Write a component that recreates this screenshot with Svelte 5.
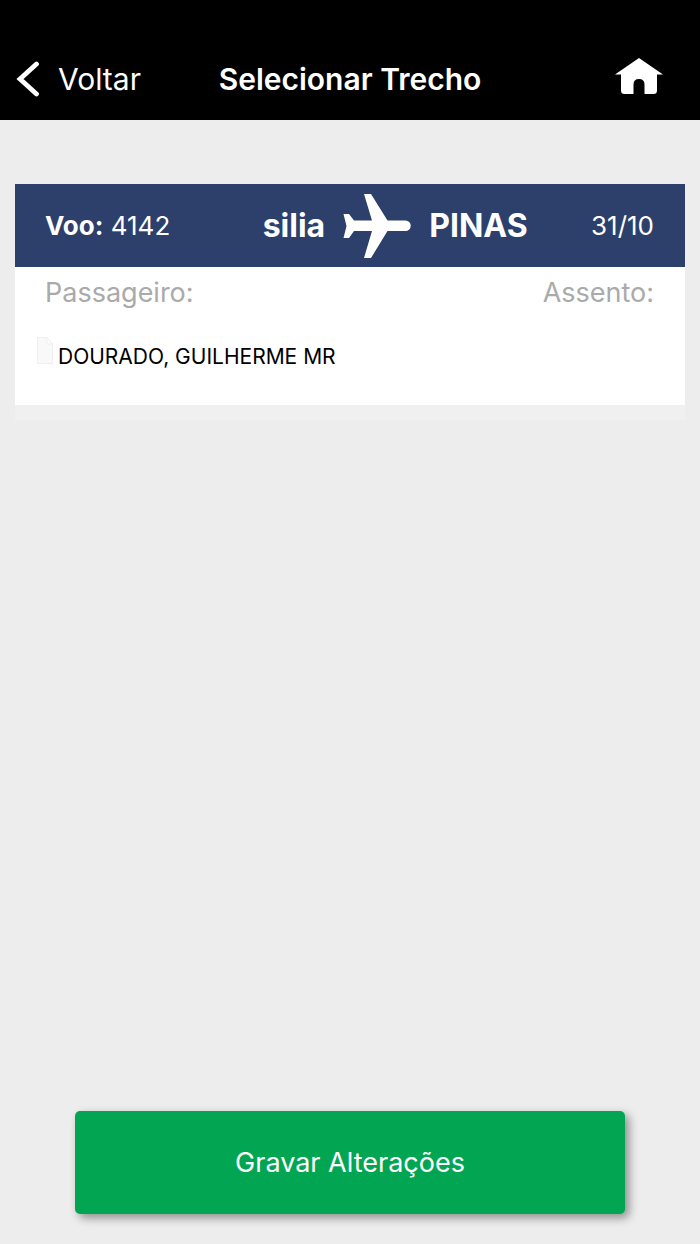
<script lang="ts">
  let { onBack = () => {}, onSave = () => {} } = $props();

  const flight = { number: '4142', from: 'silia', to: 'PINAS', date: '31/10' };

  let passengers = $state([
    { name: 'DOURADO, GUILHERME MR', seat: '' },
  ]);
</script>

<div class="page">
  <header class="navbar">
    <button class="back-btn" onclick={() => onBack()}>
      <svg width="24" height="36" viewBox="0 0 24 36" aria-hidden="true">
        <path d="M20.5 3 L4 18 L20.5 33" fill="none" stroke="#fff" stroke-width="4.8" stroke-linecap="round" />
      </svg>
      <span>Voltar</span>
    </button>
    <h1 class="title">Selecionar Trecho</h1>
    <a class="home-link" href="/" aria-label="Início">
      <svg width="48" height="37" viewBox="0 0 48 37" aria-hidden="true">
        <path
          d="M24 0 L48 16.5 H42 V32.5 Q42 36 38.5 36 H29.5 V26.5 Q29.5 21 24 21 Q18.5 21 18.5 26.5 V36 H9.5 Q6 36 6 32.5 V16.5 H0 Z"
          fill="#fff"
        />
      </svg>
    </a>
  </header>

  <main class="content">
    <section class="card">
      <div class="card-header">
        <div class="flight"><strong>Voo:</strong> {flight.number}</div>
        <div class="route">
          <span>{flight.from}</span>
          <svg width="68" height="64" viewBox="0 0 68 64" aria-hidden="true">
            <path
              d="M21 0 H28 L44.5 26.5 H62.5 A5.2 5.2 0 0 1 62.5 37 H44.5 L28 64 H21 L29 37 H11 L6 44 H0.5 L3.5 32 L0.5 20 H6 L11 26.5 H29 Z"
              fill="#fff"
            />
          </svg>
          <span>{flight.to}</span>
        </div>
        <div class="date">{flight.date}</div>
      </div>

      <div class="card-body">
        <div class="labels">
          <span>Passageiro:</span>
          <span>Assento:</span>
        </div>
        <ul class="passengers">
          {#each passengers as passenger}
            <li>
              <svg width="16" height="27" viewBox="0 0 16 27" aria-hidden="true">
                <path d="M0.5 0.5 H10 L15.5 7 V26.5 H0.5 Z M10 0.5 V7 H15.5" fill="#f9f9f9" stroke="#efefef" />
              </svg>
              <span class="name">{passenger.name}</span>
              <span class="seat">{passenger.seat}</span>
            </li>
          {/each}
        </ul>
      </div>
    </section>
  </main>

  <footer class="footer">
    <button class="save-btn" onclick={() => onSave()}>Gravar Alterações</button>
  </footer>
</div>

<style>
  :global(body) {
    background: #ededed;
  }

  .page {
    min-height: 100vh;
    display: flex;
    flex-direction: column;
    font-family: Inter, "Liberation Sans", sans-serif;
    color: #000;
  }

  .navbar {
    display: grid;
    grid-template-columns: 1fr auto 1fr;
    align-items: center;
    padding: 38px 16px 0;
    height: 82px;
    background: #000;
    color: #fff;
  }

  .back-btn {
    display: flex;
    align-items: center;
    gap: 18px;
    padding: 0;
    border: none;
    background: none;
    color: #fff;
    font: inherit;
    font-size: 30px;
    cursor: pointer;
  }

  .title {
    margin: 0;
    font-size: 30px;
    font-weight: 600;
  }

  .home-link {
    display: flex;
    justify-content: flex-end;
    padding: 0 21px 6px 0;
  }

  .content {
    flex: 1;
    padding: 64px 15px;
  }

  .card {
    background: #fff;
    border-bottom: 15px solid #f0f0f0;
  }

  .card-header {
    display: grid;
    grid-template-columns: 7fr 9fr 4fr;
    align-items: center;
    height: 83px;
    padding: 0 31px 0 30px;
    background: #2c406b;
    color: #fff;
    font-size: 26px;
  }

  .flight strong {
    font-weight: 700;
  }

  .route {
    display: flex;
    align-items: center;
    justify-content: center;
    gap: 18px;
    font-size: 32px;
    font-weight: 700;
  }

  .date {
    text-align: right;
  }

  .card-body {
    padding: 9px 31px 28px 22px;
  }

  .labels {
    display: flex;
    justify-content: space-between;
    padding-left: 8px;
    color: #aaa;
    font-size: 27px;
    line-height: 34px;
  }

  .passengers {
    list-style: none;
    margin: 0;
    padding: 27px 0 0;
  }

  .passengers li {
    display: flex;
    align-items: flex-start;
    gap: 5px;
  }

  .name,
  .seat {
    font-size: 21px;
    line-height: 40px;
  }

  .name {
    flex: 1;
  }

  .footer {
    padding: 0 75px 30px;
  }

  .save-btn {
    width: 100%;
    height: 103px;
    border: none;
    border-radius: 5px;
    background: #02a551;
    box-shadow: 4px 4px 10px rgba(0, 0, 0, 0.4);
    color: #fff;
    font: inherit;
    font-size: 27px;
    cursor: pointer;
  }
</style>
